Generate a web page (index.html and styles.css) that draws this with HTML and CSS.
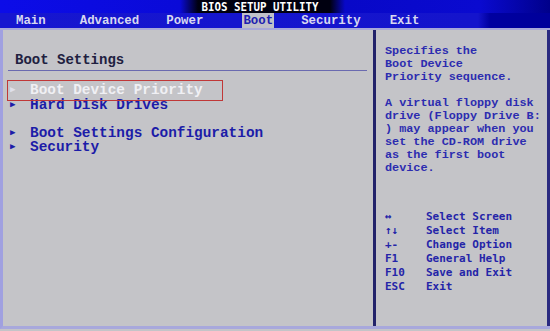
FILE: index.html
```html
<!DOCTYPE html>
<html>
<head>
<meta charset="utf-8">
<link rel="stylesheet" href="styles.css">
</head>
<body>
<div class="screen">
  <div class="title"><span>BIOS SETUP UTILITY</span></div>
  <div class="menu">
    <span class="tab t-main">Main</span>
    <span class="tab t-adv">Advanced</span>
    <span class="tab t-power">Power</span>
    <span class="tab t-boot active">Boot</span>
    <span class="tab t-sec">Security</span>
    <span class="tab t-exit">Exit</span>
  </div>
  <div class="body">
    <div class="left">
      <div class="heading">Boot Settings</div>
      <div class="rule"></div>
      <ul class="items">
        <li class="item selected"><span class="arrow">&#9654;</span>Boot Device Priority</li>
        <li class="item"><span class="arrow">&#9654;</span>Hard Disk Drives</li>
        <li class="item spacer"></li>
        <li class="item"><span class="arrow">&#9654;</span>Boot Settings Configuration</li>
        <li class="item"><span class="arrow">&#9654;</span>Security</li>
      </ul>
    </div>
    <div class="right">
      <p class="help">Specifies the<br>Boot Device<br>Priority sequence.</p>
      <p class="help">A virtual floppy disk<br>drive (Floppy Drive B:<br>) may appear when you<br>set the CD-ROM drive<br>as the first boot<br>device.</p>
      <dl class="keys">
        <dt>&#8596;</dt><dd>Select Screen</dd>
        <dt>&#8593;&#8595;</dt><dd>Select Item</dd>
        <dt>+-</dt><dd>Change Option</dd>
        <dt>F1</dt><dd>General Help</dd>
        <dt>F10</dt><dd>Save and Exit</dd>
        <dt>ESC</dt><dd>Exit</dd>
      </dl>
    </div>
  </div>
</div>
</body>
</html>
```
FILE: styles.css
```css
* { box-sizing: border-box; }
html, body { margin: 0; padding: 0; }
body {
  width: 550px;
  height: 331px;
  background: #b8b8cc;
  font-family: "Liberation Mono", "DejaVu Sans Mono", monospace;
  overflow: hidden;
}
.screen {
  width: 550px;
  height: 331px;
  display: flex;
  flex-direction: column;
  background: #c4c4c8;
}
.title {
  height: 13px;
  background: linear-gradient(to right, #0c0ce8 0px, #0a0ad8 180px, #000010 198px, #000010 330px, #0808c8 345px, #0a0ad0 480px, #00008a 550px);
  display: flex;
  justify-content: center;
  align-items: center;
  color: #ffffff;
  font-family: "DejaVu Sans Mono", monospace;
  font-weight: bold;
  font-size: 12px;
  padding-right: 30px;
}
.title span { display: inline-block; transform: scaleX(0.9); }
.menu {
  height: 17px;
  background: linear-gradient(to right, #1616d0 0px, #1414cc 478px, #0000a0 490px, #00009a 550px);
  display: flex;
  align-items: stretch;
  color: #d8d8f0;
  font-size: 12.4px;
  font-weight: bold;
  border-bottom: 2px solid #a8a8d8;
}
.tab {
  display: flex;
  align-items: center;
  padding: 0 1px;
}
.t-main { margin-left: 15px; }
.t-adv { margin-left: 32px; }
.t-power { margin-left: 25px; }
.t-boot { margin-left: 38px; }
.t-sec { margin-left: 26px; }
.t-exit { margin-left: 27px; }
.tab.active {
  background: #c0c0c8;
  color: #2020b0;
}
.body {
  flex: 1;
  display: grid;
  grid-template-columns: 373px 1fr;
  border-left: 3px solid #a0a0e0;
  border-bottom: 3px solid #a8a8dc;
  margin-bottom: 2px;
  background: #c4c4c8;
}
.left {
  border-right: 3px solid #22226a;
  padding: 22px 0 0 0;
}
.heading {
  font-size: 14px;
  font-weight: bold;
  color: #202040;
  padding-left: 12px;
  height: 17px;
  line-height: 17px;
}
.rule {
  height: 1px;
  background: #6a6ab0;
  margin: 1px 6px 0 5px;
}
.items {
  list-style: none;
  margin: 10px 0 0 0;
  padding: 0;
}
.item {
  font-size: 14.4px;
  font-weight: bold;
  color: #1c1ca8;
  height: 14.5px;
  line-height: 14.5px;
  display: flex;
  align-items: center;
  padding-left: 7px;
}
.item.spacer { height: 13px; }
.arrow {
  font-size: 9px;
  width: 20px;
  padding-left: 0px;
}
.item.selected {
  color: #f0f0f4;
  outline: 1px solid #c03838;
  outline-offset: 0;
  width: 214px;
  margin-left: 5px;
  padding-left: 2px;
  height: 19px;
  margin-bottom: -2px;
  margin-top: 0px;
  box-shadow: 0 0 0 1px rgba(200,90,90,0.5);
}
.item.selected .arrow { color: #e0e0ea; }
.right {
  border-right: 3px solid #2a2a80;
  padding: 15px 0 0 9px;
  color: #2c2cb0;
  font-size: 12px;
  font-weight: bold;
}
.help {
  margin: 0 0 13px 0;
  line-height: 13px;
  font-size: 11.8px;
}
.keys {
  margin: 35px 0 0 0;
  display: grid;
  grid-template-columns: 41px 1fr;
  row-gap: 0;
  font-family: "DejaVu Sans Mono", monospace;
  font-size: 11px;
  line-height: 14px;
  color: #2424a8;
}
.keys dt { margin: 0; }
.keys dd { margin: 0; }
```
